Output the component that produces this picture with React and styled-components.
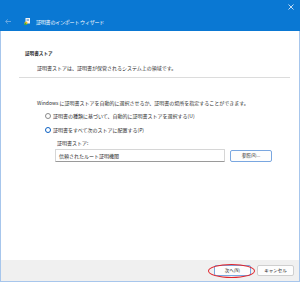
import styled, { createGlobalStyle } from "styled-components";

const Global = createGlobalStyle`
	html, body {
		margin: 0;
		padding: 0;
		background: #ffffff;
	}
	body {
		font-family: "Noto Sans CJK JP", "Noto Sans", sans-serif;
	}
`;

const Window = styled.div`
	width: 300px;
	height: 282px;
	box-sizing: border-box;
	display: flex;
	flex-direction: column;
	border: 1px solid #a7c6ec;
	border-top: none;
	background: #ffffff;
	color: #2b2b2b;
	font-size: 5px;
	line-height: 7px;
`;

const TitleBar = styled.div`
	height: 31px;
	margin: 0 -1px;
	background: #0a78d3;
	display: flex;
	justify-content: space-between;
	padding: 0 6px 0 5px;
	flex-shrink: 0;
`;

const TitleLeft = styled.div`
	display: flex;
	align-items: center;
	align-self: flex-end;
	height: 20px;
	gap: 5px;
	color: #ffffff;
`;

const TitleText = styled.span`
	font-size: 5px;
	letter-spacing: -0.2px;
	margin-left: 1px;
`;

const Close = styled.div`
	margin-top: 4px;
	width: 6px;
	height: 6px;
`;

const Header = styled.div`
	padding: 19px 0 0 24px;
`;

const HeaderTitle = styled.div`
	font-weight: 700;
	font-size: 4.6px;
`;

const HeaderDesc = styled.div`
	margin: 7px 0 0 12px;
`;

const Separator = styled.div`
	height: 1px;
	background: #dcdcdc;
	margin: 6px 9px 0 18px;
`;

const Body = styled.div`
	padding: 21px 0 0 36px;
	flex: 1;
`;

const Options = styled.div`
	display: flex;
	flex-direction: column;
	gap: 7px;
	margin: 6px 0 0 8px;
`;

const Option = styled.div`
	display: flex;
	align-items: center;
	gap: 2px;
`;

const Radio = styled.span`
	width: 6px;
	height: 6px;
	box-sizing: border-box;
	border-radius: 50%;
	border: ${(p) => (p.$checked ? "1.8px solid #0a5fc2" : "0.8px solid #8a8a8a")};
	background: #ffffff;
	flex-shrink: 0;
`;

const StoreBlock = styled.div`
	margin: 6px 0 0 18px;
`;

const StoreLabel = styled.div`
	margin-left: 2px;
`;

const StoreRow = styled.div`
	display: flex;
	align-items: center;
	gap: 5px;
	margin-top: 3px;
`;

const Input = styled.div`
	width: 170px;
	height: 13px;
	box-sizing: border-box;
	border: 1px solid #d6d6d6;
	border-bottom-color: #9a9a9a;
	border-radius: 1px;
	padding-left: 3px;
	display: flex;
	align-items: center;
`;

const Button = styled.div`
	width: ${(p) => p.$w || 37}px;
	height: ${(p) => p.$h || 11}px;
	box-sizing: border-box;
	border: 1px solid ${(p) => (p.$accent ? "#7aa7e0" : "#cfcfcf")};
	border-radius: 2px;
	background: #fdfdfd;
	display: flex;
	align-items: center;
	justify-content: center;
	font-size: 4.5px;
	position: relative;
`;

const Footer = styled.div`
	height: 20px;
	background: #f0f0f0;
	display: flex;
	justify-content: flex-end;
	align-items: center;
	gap: 6px;
	padding: 0 5px 1px 0;
	flex-shrink: 0;
`;

const Mark = styled.span`
	position: absolute;
	left: -7px;
	top: -2px;
	width: 45px;
	height: 12px;
	border: 1px solid #e0232b;
	border-radius: 50%;
	pointer-events: none;
`;

const CertIcon = () => (
	<svg width="6" height="7" viewBox="0 0 6 7">
		<rect x="1.5" y="0" width="4.5" height="5.5" fill="#f3f3f3" />
		<rect x="2.5" y="1" width="2.5" height="0.6" fill="#4a8fd1" />
		<rect x="2.5" y="2.2" width="2.5" height="0.6" fill="#4a8fd1" />
		<circle cx="2" cy="5" r="1.6" fill="#e8b823" />
		<path d="M0 7 L1.5 4.5 L3 7 Z" fill="#3cae3a" />
	</svg>
);

const BackArrow = () => (
	<svg width="6" height="5" viewBox="0 0 6 5">
		<path d="M6 2.5 H0.8 M2.8 0.4 L0.6 2.5 L2.8 4.6" stroke="#7fb4e6" strokeWidth="0.8" fill="none" />
	</svg>
);

const CloseIcon = () => (
	<svg width="6" height="6" viewBox="0 0 6 6">
		<path d="M0.5 0.5 L5.5 5.5 M5.5 0.5 L0.5 5.5" stroke="#d9e9f8" strokeWidth="0.9" />
	</svg>
);

const App = () => {
	return (
		<>
			<Global />
			<Window>
				<TitleBar>
					<TitleLeft>
						<BackArrow />
						<span style={{ width: 3 }} />
						<CertIcon />
						<TitleText>証明書のインポート ウィザード</TitleText>
					</TitleLeft>
					<Close>
						<CloseIcon />
					</Close>
				</TitleBar>
				<Header>
					<HeaderTitle>証明書ストア</HeaderTitle>
					<HeaderDesc>証明書ストアは、証明書が保管されるシステム上の領域です。</HeaderDesc>
				</Header>
				<Separator />
				<Body>
					<div>Windows に証明書ストアを自動的に選択させるか、証明書の場所を指定することができます。</div>
					<Options>
						<Option>
							<Radio />
							証明書の種類に基づいて、自動的に証明書ストアを選択する(U)
						</Option>
						<Option>
							<Radio $checked />
							証明書をすべて次のストアに配置する(P)
						</Option>
					</Options>
					<StoreBlock>
						<StoreLabel>証明書ストア:</StoreLabel>
						<StoreRow>
							<Input>信頼されたルート証明機関</Input>
							<Button $w={42} $h={12} $accent>
								参照(R)...
							</Button>
						</StoreRow>
					</StoreBlock>
				</Body>
				<Footer>
					<Button $accent>
						次へ(N)
						<Mark />
					</Button>
					<Button>キャンセル</Button>
				</Footer>
			</Window>
		</>
	);
};

export default App;
